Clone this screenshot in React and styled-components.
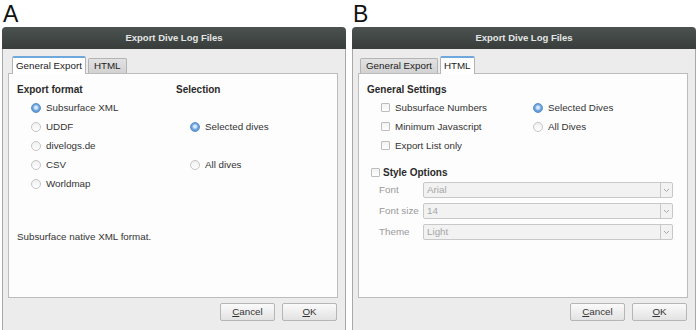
import React from "react";
import styled, { createGlobalStyle } from "styled-components";

const GlobalStyle = createGlobalStyle`
  html, body {
    margin: 0;
    padding: 0;
    background: #ffffff;
  }
  body {
    font-family: "Liberation Sans", Arial, sans-serif;
  }
`;

const exportFormats = ["Subsurface XML", "UDDF", "divelogs.de", "CSV", "Worldmap"];
const selections = ["Selected dives", "All dives"];
const htmlSettings = ["Subsurface Numbers", "Minimum Javascript", "Export List only"];
const htmlSelections = ["Selected Dives", "All Dives"];
const styleFields = [
  { label: "Font", value: "Arial" },
  { label: "Font size", value: "14" },
  { label: "Theme", value: "Light" },
];

const ExportDialog = ({ activeTab, children }) => (
  <Window>
    <TitleBar>Export Dive Log Files</TitleBar>
    <WindowBody>
      <TabBar>
        <Tab $active={activeTab === 0}>General Export</Tab>
        <Tab $active={activeTab === 1}>HTML</Tab>
      </TabBar>
      <Pane>{children}</Pane>
      <ButtonRow>
        <Button>
          <u>C</u>ancel
        </Button>
        <Button>
          <u>O</u>K
        </Button>
      </ButtonRow>
    </WindowBody>
  </Window>
);

const App = () => {
  return (
    <>
      <GlobalStyle />
      <Page>
        <Figure>
          <FigLabel>A</FigLabel>
          <ExportDialog activeTab={0}>
            <Columns>
              <div>
                <Heading>Export format</Heading>
                <OptionList>
                  {exportFormats.map((item, i) => (
                    <Option key={item}>
                      <Radio $checked={i === 0} />
                      {item}
                    </Option>
                  ))}
                </OptionList>
              </div>
              <div>
                <Heading>Selection</Heading>
                <OptionList $spread>
                  {selections.map((item, i) => (
                    <Option key={item}>
                      <Radio $checked={i === 0} />
                      {item}
                    </Option>
                  ))}
                </OptionList>
              </div>
            </Columns>
            <Description>Subsurface native XML format.</Description>
          </ExportDialog>
        </Figure>

        <Figure>
          <FigLabel>B</FigLabel>
          <ExportDialog activeTab={1}>
            <Heading>General Settings</Heading>
            <SettingsRow>
              <OptionList $width={166}>
                {htmlSettings.map((item) => (
                  <Option key={item}>
                    <Checkbox />
                    {item}
                  </Option>
                ))}
              </OptionList>
              <OptionList $flat>
                {htmlSelections.map((item, i) => (
                  <Option key={item}>
                    <Radio $checked={i === 0} />
                    {item}
                  </Option>
                ))}
              </OptionList>
            </SettingsRow>
            <GroupHeader>
              <Checkbox />
              Style Options
            </GroupHeader>
            <FormGrid>
              {styleFields.map((f) => (
                <React.Fragment key={f.label}>
                  <FieldLabel>{f.label}</FieldLabel>
                  <Combo>
                    <ComboText>{f.value}</ComboText>
                    <ComboArrow>
                      <svg width="7" height="5" viewBox="0 0 7 5">
                        <polyline
                          points="1,1 3.5,3.5 6,1"
                          fill="none"
                          stroke="#a8a8a8"
                          strokeWidth="1"
                        />
                      </svg>
                    </ComboArrow>
                  </Combo>
                </React.Fragment>
              ))}
            </FormGrid>
          </ExportDialog>
        </Figure>
      </Page>
    </>
  );
};

export default App;

const Page = styled.div`
  display: grid;
  grid-template-columns: 344px 344px;
  column-gap: 6px;
  padding-left: 2px;
  width: 700px;
  height: 330px;
  overflow: hidden;
`;

const Figure = styled.div`
  display: flex;
  flex-direction: column;
`;

const FigLabel = styled.div`
  height: 27px;
  box-sizing: border-box;
  padding: 2px 0 0 1px;
  font-size: 23px;
  line-height: 25px;
  color: #111;
`;

const Window = styled.div`
  flex: 1;
  display: flex;
  flex-direction: column;
`;

const TitleBar = styled.div`
  height: 22px;
  border-radius: 4px 4px 0 0;
  background: linear-gradient(#4b5250, #383d3b);
  color: #e4e6e5;
  font-weight: bold;
  font-size: 9.5px;
  line-height: 22px;
  text-align: center;
`;

const WindowBody = styled.div`
  flex: 1;
  display: flex;
  flex-direction: column;
  background: #ececec;
  border-left: 1px solid #a8a8a8;
  border-right: 1px solid #a8a8a8;
  padding: 7px 7px 0 5px;
`;

const TabBar = styled.div`
  display: flex;
  align-items: flex-end;
  height: 17px;
  padding-left: 2px;
  position: relative;
  z-index: 1;
`;

const Tab = styled.div`
  box-sizing: border-box;
  font-size: 9.8px;
  color: #222;
  white-space: nowrap;
  height: ${(p) => (p.$active ? "18px" : "15px")};
  line-height: ${(p) => (p.$active ? "15px" : "14px")};
  padding: ${(p) => (p.$active ? "0 3px" : "0 5px")};
  margin: ${(p) => (p.$active ? "0 2px -1px" : "0")};
  border: 1px solid #b4b4b4;
  border-bottom: none;
  border-top: ${(p) => (p.$active ? "2px solid #6fa8dc" : "1px solid #b4b4b4")};
  border-radius: 2px 2px 0 0;
  background: ${(p) =>
    p.$active ? "#ffffff" : "linear-gradient(#e2e2e2, #d2d2d2)"};
`;

const Pane = styled.div`
  height: 225px;
  box-sizing: border-box;
  background: #fdfdfd;
  border: 1px solid #bcbcbc;
  padding: 8px 9px 0 8px;
  color: #333;
  font-size: 9.8px;
`;

const ButtonRow = styled.div`
  display: flex;
  justify-content: flex-end;
  gap: 7px;
  padding: 5px 1px 0 0;
`;

const Button = styled.div`
  width: 55px;
  height: 18px;
  box-sizing: border-box;
  border: 1px solid #b6b6b6;
  border-radius: 2px;
  background: linear-gradient(#fafafa, #e2e2e2);
  font-size: 9.8px;
  line-height: 16px;
  text-align: center;
  color: #333;
`;

const Columns = styled.div`
  display: grid;
  grid-template-columns: 159px 1fr;
`;

const Heading = styled.div`
  height: 16px;
  line-height: 16px;
  font-weight: bold;
  font-size: 10px;
  color: #2a2a2a;
`;

const OptionList = styled.div`
  display: flex;
  flex-direction: column;
  padding-left: ${(p) => (p.$flat ? "0" : "14px")};
  width: ${(p) => (p.$width ? `${p.$width}px` : "auto")};
  box-sizing: border-box;
  height: ${(p) => (p.$spread ? "95px" : "auto")};
  justify-content: ${(p) => (p.$spread ? "space-evenly" : "flex-start")};
`;

const Option = styled.div`
  display: flex;
  align-items: center;
  gap: 5px;
  height: 19px;
  white-space: nowrap;
`;

const Radio = styled.span`
  width: 10px;
  height: 10px;
  box-sizing: border-box;
  border-radius: 50%;
  flex-shrink: 0;
  border: 1px solid ${(p) => (p.$checked ? "#5a8fc8" : "#c4c4c4")};
  background: ${(p) =>
    p.$checked
      ? "radial-gradient(circle at 50% 45%, #d6e8fa 0 22%, #6ea6e0 50%, #4a86c8 100%)"
      : "linear-gradient(#f0f0f0, #ffffff)"};
`;

const Checkbox = styled.span`
  width: 9px;
  height: 9px;
  box-sizing: border-box;
  flex-shrink: 0;
  border: 1px solid #bdbdbd;
  border-radius: 1px;
  background: linear-gradient(#f2f2f2, #ffffff);
`;

const Description = styled.div`
  margin-top: 34px;
  line-height: 19px;
`;

const SettingsRow = styled.div`
  display: flex;
`;

const GroupHeader = styled.div`
  display: flex;
  align-items: center;
  gap: 3px;
  margin-top: 9px;
  padding-left: 4px;
  height: 17px;
  font-weight: bold;
  font-size: 10px;
  color: #2a2a2a;
`;

const FormGrid = styled.div`
  display: grid;
  grid-template-columns: 44px 1fr;
  grid-auto-rows: 16px;
  row-gap: 5px;
  margin-top: 1px;
  padding: 0 5px 0 12px;
`;

const FieldLabel = styled.div`
  line-height: 16px;
  color: #999;
`;

const Combo = styled.div`
  display: flex;
  box-sizing: border-box;
  border: 1px solid #c8c8c8;
  border-radius: 2px;
  background: #f2f2f2;
`;

const ComboText = styled.div`
  flex: 1;
  padding-left: 3px;
  line-height: 14px;
  color: #a6a6a6;
`;

const ComboArrow = styled.div`
  width: 11px;
  display: flex;
  align-items: center;
  justify-content: center;
  border-left: 1px solid #c8c8c8;
`;
